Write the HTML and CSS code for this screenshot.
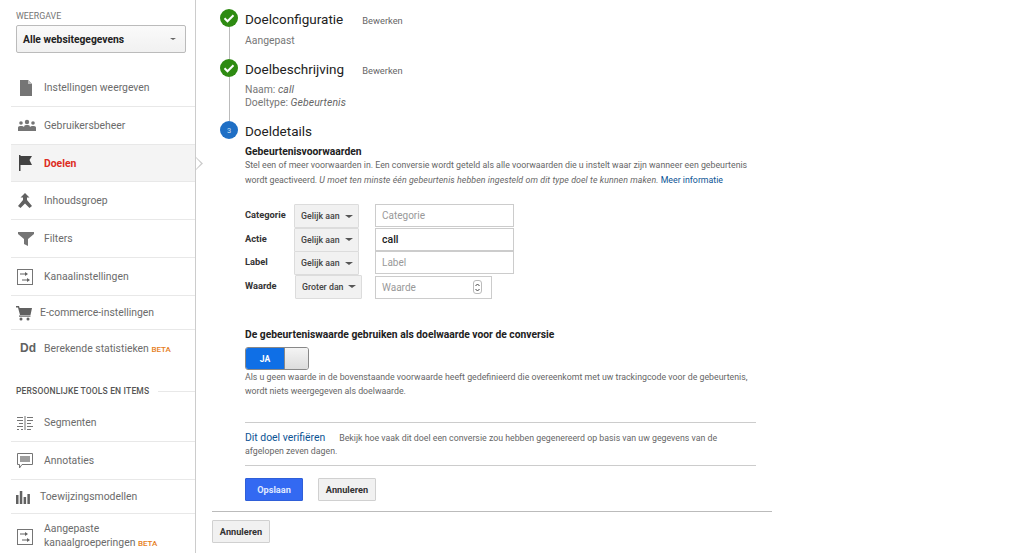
FILE: index.html
```html
<!DOCTYPE html>
<html lang="nl">
<head>
<meta charset="utf-8">
<title>Doel</title>
<link rel="stylesheet" href="styles.css">
</head>
<body>
<div class="page">
<aside class="sidebar">
  <div class="view-label">WEERGAVE</div>
  <div class="view-select"><span>Alle websitegegevens</span><i class="caret dark"></i></div>
  <nav class="nav">
    <a class="item h38"><span class="ico"><svg width="18" height="18" viewBox="0 0 18 18"><path d="M3 1h8l4 4v12H3z" fill="#757575"/><path d="M11 1v4h4z" fill="#bdbdbd"/></svg></span>Instellingen weergeven</a>
    <a class="item h38"><span class="ico"><svg width="20" height="14" viewBox="0 0 20 14"><g fill="#757575"><circle cx="4" cy="4" r="1.8"/><circle cx="10" cy="3" r="2.2"/><circle cx="16" cy="4" r="1.8"/><path d="M1 12V8.500Q1 7 3 7h2q1 0 2 1v4zM7 12V8q0-2 2-2h2q2 0 2 2v4zM13 12V8q1-1 2-1h2q2 0 2 1.500V12z"/></g></svg></span>Gebruikersbeheer</a>
    <a class="item h37 active"><span class="ico"><svg width="18" height="18" viewBox="0 0 18 18"><path d="M2 1h1.500v16H2zM3.500 2H15l-2.500 4 2.500 5H3.500z" fill="#424242"/></svg></span>Doelen</a>
    <a class="item h38"><span class="ico"><svg width="16" height="18" viewBox="0 0 16 18"><path d="M8 1l4.500 4.500H10V8l5 6-2.500 2L8 11.500 3.500 16 1 14l5-6V5.500H3.500z" fill="#616161"/></svg></span>Inhoudsgroep</a>
    <a class="item h38"><span class="ico"><svg width="18" height="16" viewBox="0 0 18 16"><path d="M0 1h16v2l-6 5v7l-4-2V8L0 3z" transform="translate(1 0)" fill="#757575"/></svg></span>Filters</a>
    <a class="item h38"><span class="ico"><svg width="16" height="16" viewBox="0 0 16 16"><rect x=".5" y=".5" width="15" height="15" fill="none" stroke="#757575"/><path d="M3 4.500h5V3l3 2-3 2V5.500H3zM5 10.500h5V9l3 2-3 2v-1.500H5z" fill="#616161"/></svg></span>Kanaalinstellingen</a>
    <a class="item h34 tight"><span class="ico wide"><svg width="16" height="16" viewBox="0 0 16 16"><path d="M0 1h3l.6 2H16l-1.500 7H4L2 2.500H0z" fill="#616161"/><rect x="3" y="10.500" width="11.500" height="1.200" fill="#616161"/><circle cx="5" cy="14" r="1.500" fill="#616161"/><circle cx="12" cy="14" r="1.500" fill="#616161"/></svg></span>E-commerce-instellingen</a>
    <a class="item h36 noline"><span class="ico dd">Dd</span><span>Berekende statistieken <b class="beta">BETA</b></span></a>
  </nav>
  <div class="section-head"><span>PERSOONLIJKE TOOLS EN ITEMS</span><i></i></div>
  <nav class="nav">
    <a class="item h38"><span class="ico"><svg width="16" height="14" viewBox="0 0 16 14"><path d="M7.500 0h1v14h-1z" fill="#757575"/><path d="M0 1h6v1H0zM0 4h6v1H0zM2 7h4v1H2zM0 10h6v1H0zM0 13h2v1H0zM4 13h2v1H4zM10 1h6v1h-6zM10 4h6v1h-6zM10 7h4v1h-4zM10 10h6v1h-6zM10 13h4v1h-4z" fill="#757575"/></svg></span>Segmenten</a>
    <a class="item h38"><span class="ico"><svg width="16" height="16" viewBox="0 0 16 16"><path d="M.5.500h15v11H5L2.500 15v-3.500h-2z" fill="#fff" stroke="#757575"/><rect x="3" y="3" width="10" height="6" fill="#9e9e9e"/></svg></span>Annotaties</a>
    <a class="item h34 tight"><span class="ico wide"><svg width="16" height="14" viewBox="0 0 16 14"><path d="M0 5h2.500v9H0zM3.800 1h2.500v13H3.800zM7.600 7h2.500v7H7.600zM11.400 4h2.500v10h-2.500z" fill="#616161"/></svg></span>Toewijzingsmodellen</a>
    <a class="item multi"><span class="ico"><svg width="16" height="16" viewBox="0 0 16 16"><rect x=".5" y=".5" width="15" height="15" fill="none" stroke="#757575"/><path d="M3 4.500h5V3l3 2-3 2V5.500H3zM5 10.500h5V9l3 2-3 2v-1.500H5z" fill="#616161"/></svg></span><span>Aangepaste<br>kanaalgroeperingen <b class="beta">BETA</b></span></a>
  </nav>
</aside>
<main class="main">
  <section class="step s1">
    <div class="rail"><span class="dot ok"><svg width="18" height="18" viewBox="0 0 18 18"><path d="M4.500 9.300l3 3 6-6" fill="none" stroke="#fff" stroke-width="2"/></svg></span><i class="line"></i></div>
    <div class="step-body">
      <h2>Doelconfiguratie<a class="edit">Bewerken</a></h2>
      <p class="meta first">Aangepast</p>
    </div>
  </section>
  <section class="step s2">
    <div class="rail"><span class="dot ok"><svg width="18" height="18" viewBox="0 0 18 18"><path d="M4.500 9.300l3 3 6-6" fill="none" stroke="#fff" stroke-width="2"/></svg></span><i class="line"></i></div>
    <div class="step-body">
      <h2>Doelbeschrijving<a class="edit">Bewerken</a></h2>
      <p class="meta">Naam: <em>call</em></p>
      <p class="meta">Doeltype: <em>Gebeurtenis</em></p>
    </div>
  </section>
  <section class="step s3">
    <div class="rail"><span class="dot num">3</span></div>
    <div class="step-body details">
      <h2>Doeldetails</h2>
      <h3>Gebeurtenisvoorwaarden</h3>
      <p class="help">Stel een of meer voorwaarden in. Een conversie wordt geteld als alle voorwaarden die u instelt waar zijn wanneer een gebeurtenis<br>wordt geactiveerd. <em>U moet ten minste één gebeurtenis hebben ingesteld om dit type doel te kunnen maken.</em> <a class="link">Meer informatie</a></p>
      <div class="conds">
        <div class="cond"><label>Categorie</label><span class="sel">Gelijk aan<i class="caret"></i></span><span class="inp ph">Categorie</span></div>
        <div class="cond"><label>Actie</label><span class="sel">Gelijk aan<i class="caret"></i></span><span class="inp val">call</span></div>
        <div class="cond"><label>Label</label><span class="sel">Gelijk aan<i class="caret"></i></span><span class="inp ph">Label</span></div>
        <div class="cond last"><label>Waarde</label><span class="sel big">Groter dan<i class="caret"></i></span><span class="inp ph num-inp">Waarde<span class="spin"><svg width="7" height="11" viewBox="0 0 7 11"><path d="M1.500 4L3.500 2l2 2M1.500 7l2 2 2-2" fill="none" stroke="#444"/></svg></span></span></div>
      </div>
      <h3 class="use">De gebeurteniswaarde gebruiken als doelwaarde voor de conversie</h3>
      <div class="toggle"><span class="on">JA</span><span class="off"></span></div>
      <p class="help tog">Als u geen waarde in de bovenstaande voorwaarde heeft gedefinieerd die overeenkomt met uw trackingcode voor de gebeurtenis,<br>wordt niets weergegeven als doelwaarde.</p>
      <p class="verify"><a class="verify-link">Dit doel verifiëren</a><span>Bekijk hoe vaak dit doel een conversie zou hebben gegenereerd op basis van uw gegevens van de</span><br><span>afgelopen zeven dagen.</span></p>
      <div class="actions"><button class="btn primary">Opslaan</button><button class="btn">Annuleren</button></div>
    </div>
  </section>
  <div class="foot"><button class="btn">Annuleren</button></div>
</main>
</div>
</body>
</html>
```
FILE: styles.css
```css
* { box-sizing: border-box; }
html, body { margin: 0; height: 553px; overflow: hidden; background: #fff; }
body { font-family: Roboto, "Liberation Sans", sans-serif; color: #333; }
h2, h3, p { margin: 0; font-weight: normal; }
.page { display: flex; height: 553px; }

.sidebar { width: 196px; flex: none; border-right: 1px solid #ccc; padding: 11px 0 0 11px; position: relative; }
.view-label { font-size: 8.800px; line-height: 10px; color: #757575; margin-left: 5px; }
.view-select { margin: 4px 0 0 5px; width: 170px; height: 28px; border: 1px solid #bbb; border-radius: 2px; background: linear-gradient(#fafafa, #f1f1f1); display: flex; align-items: center; justify-content: space-between; padding: 0 6px; font-size: 10.300px; font-weight: 700; color: #222; }
.caret { display: inline-block; width: 0; height: 0; border: 3px solid transparent; border-top: 3px solid #555; border-bottom: 0; border-left-width: 4px; border-right-width: 4px; }
.caret.dark { border-top-color: #666; border-left-width: 3px; border-right-width: 3px; border-top-width: 2px; margin-right: 3px; }
.nav { display: flex; flex-direction: column; margin-top: 16px; }
.section-head + .nav { margin-top: 0; }
.item { display: flex; align-items: center; font-size: 10.400px; color: #6b6b6b; border-bottom: 1px solid #e8e8e8; padding-left: 6px; }
.h38 { height: 38px; }
.h37 { height: 37px; }
.h36 { height: 36px; }
.h34 { height: 34px; }
.noline { border-bottom: 0; }
.tight { padding-left: 5px; }
.ico { width: 27px; flex: none; display: flex; justify-content: flex-start; align-items: center; }
.ico.wide { width: 24px; }
.dd { font-family: "Liberation Sans", sans-serif; font-size: 12px; font-weight: 700; color: #616161; padding-left: 3px; }
.item.active { background: #f4f4f4; color: #dd2c22; font-weight: 700; position: relative; }
.item.active::before { content: ""; position: absolute; left: 100%; top: 12px; width: 7px; height: 13px; margin-left: 1px; background: #ccc; clip-path: polygon(0 0, 100% 50%, 0 100%); }
.item.active::after { content: ""; position: absolute; left: 100%; top: 13px; width: 5px; height: 11px; margin-left: 1px; background: #fff; clip-path: polygon(0 0, 100% 50%, 0 100%); }
.beta { font-size: 8px; color: #e67e22; font-weight: 500; }
.section-head { display: flex; align-items: center; margin: 19px 0 0 5px; height: 12px; font-size: 8.500px; font-weight: 500; color: #555; letter-spacing: .17px; }
.section-head span { white-space: nowrap; }
.section-head i { flex: 1; height: 1px; background: #e8e8e8; margin-left: 9px; }
.section-head + .nav .item:first-child { height: 45px; padding-top: 7px; }
.multi { height: 36px; line-height: 14px; align-items: flex-start; padding-top: 8px; border-bottom: 0; }
.multi .ico { margin-top: 7px; }

.main { flex: 1; min-width: 0; padding: 9px 0 0 24px; }
.step { display: flex; }
.rail { width: 18px; flex: none; display: flex; flex-direction: column; align-items: center; }
.dot { width: 18px; height: 18px; border-radius: 50%; flex: none; display: flex; align-items: center; justify-content: center; }
.dot.ok { background: #2e8b12; }
.dot.num { background: #1f6fc5; color: #cfe2f7; font-size: 7.500px; }
.line { flex: 1; width: 1px; background: #bbb; }
.step-body { margin-left: 7px; flex: 1; min-width: 0; }
.s1 { height: 50px; }
.s2 { height: 62px; }
h2 { font-size: 13.500px; line-height: 20px; color: #222; display: flex; align-items: baseline; }
.edit { font-size: 9.300px; color: #666; margin-left: 19px; }
.s2 .edit { margin-left: 18px; }
.meta { font-size: 10.400px; line-height: 13px; color: #777; }
.meta.first { margin-top: 3px; }
.s2 .meta:nth-of-type(1) { margin-top: 2px; }
.meta em { color: #666; letter-spacing: .1px; }
.details { width: 511px; flex: none; }
h3 { font-size: 10.300px; font-weight: 700; line-height: 13px; color: #222; margin-top: 4px; }
.help { font-size: 8.790px; line-height: 15px; color: #666; white-space: nowrap; }
.help em { letter-spacing: .09px; }
.link { color: #0b5394; }
.conds { margin-top: 16px; display: flex; flex-direction: column; }
.cond { display: flex; align-items: flex-start; height: 23.500px; }
.cond label { width: 49px; flex: none; font-size: 9.300px; font-weight: 700; color: #333; line-height: 22px; }
.sel { width: 65px; height: 24px; flex: none; background: #f1f1f1; border: 1px solid #dcdcdc; border-radius: 1px; font-size: 8.800px; font-weight: 500; color: #444; white-space: nowrap; display: flex; align-items: center; justify-content: space-between; padding: 0 5px 0 6px; }
.sel.big { width: 67px; margin-left: 1px; }
.sel .caret { margin-left: 2px; flex: none; }
.inp { margin-left: 16px; width: 139px; height: 23px; flex: none; border: 1px solid #ccc; font-size: 10px; display: flex; align-items: center; padding-left: 6px; color: #999; }
.inp.val { color: #222; font-weight: 500; font-size: 10.500px; }
.num-inp { width: 117px; justify-content: space-between; padding-right: 9px; margin-left: 13px; margin-top: 1px; }
.spin { width: 9px; height: 14px; border: 1px solid #bbb; border-radius: 3px; display: flex; align-items: center; justify-content: center; }
.use { margin-top: 30px; }
.toggle { margin-top: 6px; width: 64px; height: 23px; display: flex; border-radius: 3px; overflow: hidden; border: 1px solid #888; }
.toggle .on { flex: 0 0 38px; background: #0f6fe6; color: #fff; font-size: 8.500px; font-weight: 700; display: flex; align-items: center; justify-content: center; }
.toggle .off { flex: 1; background: linear-gradient(#f4f4f4, #dcdcdc); border-left: 1px solid #888; }
.tog { line-height: 14px; }
.verify { margin-top: 24px; width: 511px; border-top: 1px solid #ccc; border-bottom: 1px solid #ccc; padding: 8px 0 8px; height: 44px; font-size: 8.790px; line-height: 13px; color: #666; }
.verify-link { color: #0b5394; font-size: 10.400px; margin-right: 14px; }
.actions { display: flex; gap: 15px; margin-top: 12px; }
.btn { height: 23px; padding: 0; width: 58px; font-family: inherit; font-size: 9.200px; font-weight: 700; color: #333; background: #f1f1f1; border: 1px solid #d0d0d0; border-radius: 1px; }
.btn.primary { background: #3369f2; border-color: #2f5fd8; color: #dfe8ff; }
.foot { margin-left: -8px; margin-top: 10px; width: 560px; border-top: 1px solid #bbb; padding-top: 8px; }
```
